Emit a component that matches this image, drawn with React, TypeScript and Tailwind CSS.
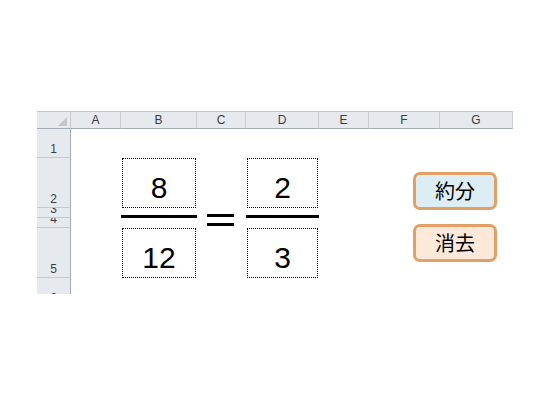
import React from "react";

const cols = ["A", "B", "C", "D", "E", "F", "G"];
const rowNums = ["1", "2", "3", "4", "5", "6"];

function FracBox({ value }: { value: string }) {
  return (
    <div className="h-full mx-[1px] border border-dotted border-black flex items-end justify-center pb-[4px] text-[30px] leading-none text-black" style={{ fontFamily: '"Liberation Sans", Arial, sans-serif' }}>
      {value}
    </div>
  );
}

export default function App() {
  const hdr = "bg-[#e6e9ee] text-[#3c3c3c] text-[12px] leading-none overflow-hidden";
  return (
    <div className="w-[560px] h-[420px] bg-white relative pt-[111px] pl-[37px]" style={{ fontFamily: '"Liberation Sans", Arial, sans-serif' }}>
      <div className="w-[476px] h-[183px] overflow-hidden">
        <div className="grid grid-cols-[34px_50px_76px_49px_73px_50px_71px_73px] grid-rows-[18px_29px_50px_10px_10px_50px_28px]">
          {/* header row */}
          <div className={`${hdr} border-t border-b border-r border-t-[#c4c8cf] border-b-[#a3abb6] border-r-[#c4c8cf] relative`}>
            <svg className="absolute right-[3px] bottom-[2px]" width="9" height="9" viewBox="0 0 9 9">
              <polygon points="9,0 9,9 0,9" fill="#c3c7cd" />
            </svg>
          </div>
          {cols.map((c) => (
            <div key={c} className={`${hdr} border-t border-b border-r border-t-[#c4c8cf] border-b-[#a3abb6] border-r-[#c9cdd4] flex items-end justify-center pb-[2px]`}>
              {c}
            </div>
          ))}

          {/* rows */}
          {rowNums.map((r, i) => {
            const rowIdx = i + 2;
            return (
              <div
                key={r}
                className={`${hdr} border-r border-r-[#a3abb6] ${i < 5 ? "border-b border-b-[#c4c8cf]" : ""} flex items-end justify-center pb-[2px]`}
                style={{ gridRow: rowIdx, gridColumn: 1 }}
              >
                {r}
              </div>
            );
          })}

          {/* row 2 boxes */}
          <div className="col-start-3 row-start-3">
            <FracBox value="8" />
          </div>
          <div className="col-start-5 row-start-3">
            <FracBox value="2" />
          </div>

          {/* bars row 3 */}
          <div className="col-start-3 row-start-4 border-b-[3px] border-black" />
          <div className="col-start-5 row-start-4 border-b-[3px] border-black" />

          {/* equals */}
          <div className="col-start-4 row-start-4 row-span-2 flex flex-col pt-[6px] pl-[10px] gap-[6px]">
            <div className="w-[27px] h-[3px] bg-black" />
            <div className="w-[27px] h-[3px] bg-black" />
          </div>

          {/* row 5 boxes */}
          <div className="col-start-3 row-start-6">
            <FracBox value="12" />
          </div>
          <div className="col-start-5 row-start-6">
            <FracBox value="3" />
          </div>
        </div>
      </div>

      {/* buttons */}
      <div className="absolute left-[413px] top-[172px] flex flex-col gap-[14px]" style={{ fontFamily: '"Noto Sans CJK JP", sans-serif' }}>
        <div className="w-[84px] h-[38px] rounded-[7px] border-[3px] border-[#e3a066] bg-[#dcedf4] flex items-center justify-center text-[20px] leading-none text-black">
          約分
        </div>
        <div className="w-[84px] h-[38px] rounded-[7px] border-[3px] border-[#e3a066] bg-[#fce9da] flex items-center justify-center text-[20px] leading-none text-black">
          消去
        </div>
      </div>
    </div>
  );
}
